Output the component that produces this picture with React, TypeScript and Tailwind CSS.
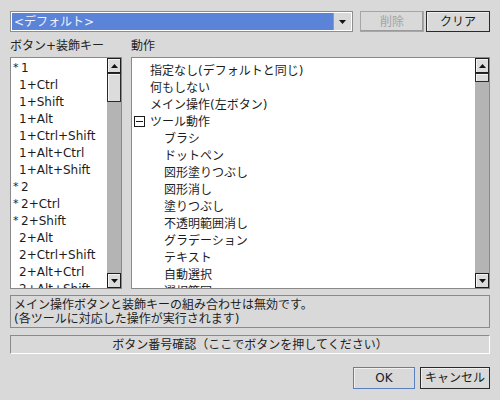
import React from "react";

const FONT = '"DejaVu Sans", "Noto Sans CJK JP", sans-serif';

function ArrowBtn({ down }: { down?: boolean }) {
  return (
    <div className="h-[15px] w-full border border-[#1e1e1e] bg-[#dcdcdc] flex items-center justify-center shadow-[inset_1px_1px_0_#f4f4f4]">
      <svg width="7" height="4" viewBox="0 0 7 4">
        {down ? <polygon points="0,0 7,0 3.5,4" fill="#111" /> : <polygon points="0,4 7,4 3.5,0" fill="#111" />}
      </svg>
    </div>
  );
}

function ScrollBar({ thumb }: { thumb: number }) {
  return (
    <div className="w-[14px] h-full flex flex-col bg-[#b4b4b4] shrink-0">
      <ArrowBtn />
      <div
        className="w-full border border-[#2a2a2a] bg-[#dcdcdc] shadow-[inset_1px_1px_0_#f4f4f4]"
        style={{ height: thumb }}
      />
      <div className="flex-1" />
      <ArrowBtn down />
    </div>
  );
}

const leftItems: [boolean, string][] = [
  [true, "1"],
  [false, "1+Ctrl"],
  [false, "1+Shift"],
  [false, "1+Alt"],
  [false, "1+Ctrl+Shift"],
  [false, "1+Alt+Ctrl"],
  [false, "1+Alt+Shift"],
  [true, "2"],
  [true, "2+Ctrl"],
  [true, "2+Shift"],
  [false, "2+Alt"],
  [false, "2+Ctrl+Shift"],
  [false, "2+Alt+Ctrl"],
  [false, "2+Alt+Shift"],
];

const toolItems = [
  "ブラシ",
  "ドットペン",
  "図形塗りつぶし",
  "図形消し",
  "塗りつぶし",
  "不透明範囲消し",
  "グラデーション",
  "テキスト",
  "自動選択",
  "選択範囲",
];

export default function App() {
  return (
    <div
      className="w-[500px] h-[400px] bg-[#d9d9d9] text-[12px] text-[#1c1c1c] px-[10px] pt-[11px] flex flex-col overflow-hidden"
      style={{ fontFamily: FONT }}
    >
      {/* top row */}
      <div className="h-[21px] flex shrink-0">
        <div className="w-[343px] h-full border border-[#8e8e8e] bg-white flex p-[1px]">
          <div className="flex-1 bg-[#5b84d9] text-[#eef2fb] flex items-center pl-[2px] leading-none">
            &lt;デフォルト&gt;
          </div>
          <div className="w-[18px] flex items-center justify-center bg-[#d9d9d9] border-l border-[#9a9a9a]">
            <svg width="7" height="4" viewBox="0 0 7 4">
              <polygon points="0,0 7,0 3.5,4" fill="#111" />
            </svg>
          </div>
        </div>
        <div className="ml-[7px] w-[64px] h-full border border-[#a6a6a6] shadow-[inset_-1px_-1px_0_#9a9a9a] flex items-center justify-center text-[#a3a3a3]">
          削除
        </div>
        <div className="ml-[2px] w-[64px] h-full border border-[#2a2a2a] shadow-[inset_1px_1px_0_#f0f0f0] flex items-center justify-center text-[#1c1c1c]">
          クリア
        </div>
      </div>

      {/* labels */}
      <div className="h-[25px] pt-[3px] flex items-center shrink-0 text-[#222]">
        <div className="w-[121px]">ボタン+装飾キー</div>
        <div>動作</div>
      </div>

      {/* lists */}
      <div className="h-[232px] flex shrink-0">
        <div className="w-[112px] h-full border border-[#8a8a8a] bg-white flex">
          <div className="flex-1 overflow-hidden pt-[1px] pl-[2px]">
            {leftItems.map(([star, t], i) => (
              <div key={i} className="h-[17px] flex items-center whitespace-nowrap">
                <span className="w-[6px] text-[11px] leading-none self-start pt-[3px]">{star ? "*" : ""}</span>
                <span className={star ? "pl-[2px]" : ""}>{t}</span>
              </div>
            ))}
          </div>
          <ScrollBar thumb={29} />
        </div>

        <div className="ml-[9px] flex-1 h-full border border-[#8a8a8a] bg-white flex">
          <div className="flex-1 overflow-hidden pt-[4px]">
            <div className="h-[17px] flex items-center pl-[18px] whitespace-nowrap">指定なし(デフォルトと同じ)</div>
            <div className="h-[17px] flex items-center pl-[18px] whitespace-nowrap">何もしない</div>
            <div className="h-[17px] flex items-center pl-[18px] whitespace-nowrap">メイン操作(左ボタン)</div>
            <div className="h-[17px] flex items-center pl-[2px] whitespace-nowrap">
              <div className="w-[11px] h-[11px] border border-[#1a1a1a] flex items-center justify-center mr-[5px]">
                <div className="w-[7px] h-[1px] bg-[#1a1a1a]" />
              </div>
              ツール動作
            </div>
            {toolItems.map((t) => (
              <div key={t} className="h-[17px] flex items-center pl-[32px] whitespace-nowrap">
                {t}
              </div>
            ))}
          </div>
          <ScrollBar thumb={9} />
        </div>
      </div>

      {/* info box */}
      <div className="mt-[6px] h-[33px] shrink-0 border border-[#8a8a8a] pl-[3px] pt-[2px] leading-[14px] text-[#1c1c1c]">
        <div>メイン操作ボタンと装飾キーの組み合わせは無効です。</div>
        <div>(各ツールに対応した操作が実行されます)</div>
      </div>

      {/* button number check */}
      <div className="mt-[7px] h-[19px] shrink-0 border-t border-l border-[#8a8a8a] border-r border-b border-r-white border-b-white flex items-center justify-center text-[#222]">
        ボタン番号確認（ここでボタンを押してください）
      </div>

      {/* OK / Cancel */}
      <div className="mt-[13px] flex justify-end shrink-0">
        <div className="w-[62px] h-[22px] border border-[#5a7fbf] shadow-[inset_1px_1px_0_#f0f0f0] flex items-center justify-center">
          OK
        </div>
        <div className="ml-[5px] w-[70px] h-[22px] border border-[#2a2a2a] shadow-[inset_1px_1px_0_#f0f0f0] flex items-center justify-center">
          キャンセル
        </div>
      </div>
    </div>
  );
}
